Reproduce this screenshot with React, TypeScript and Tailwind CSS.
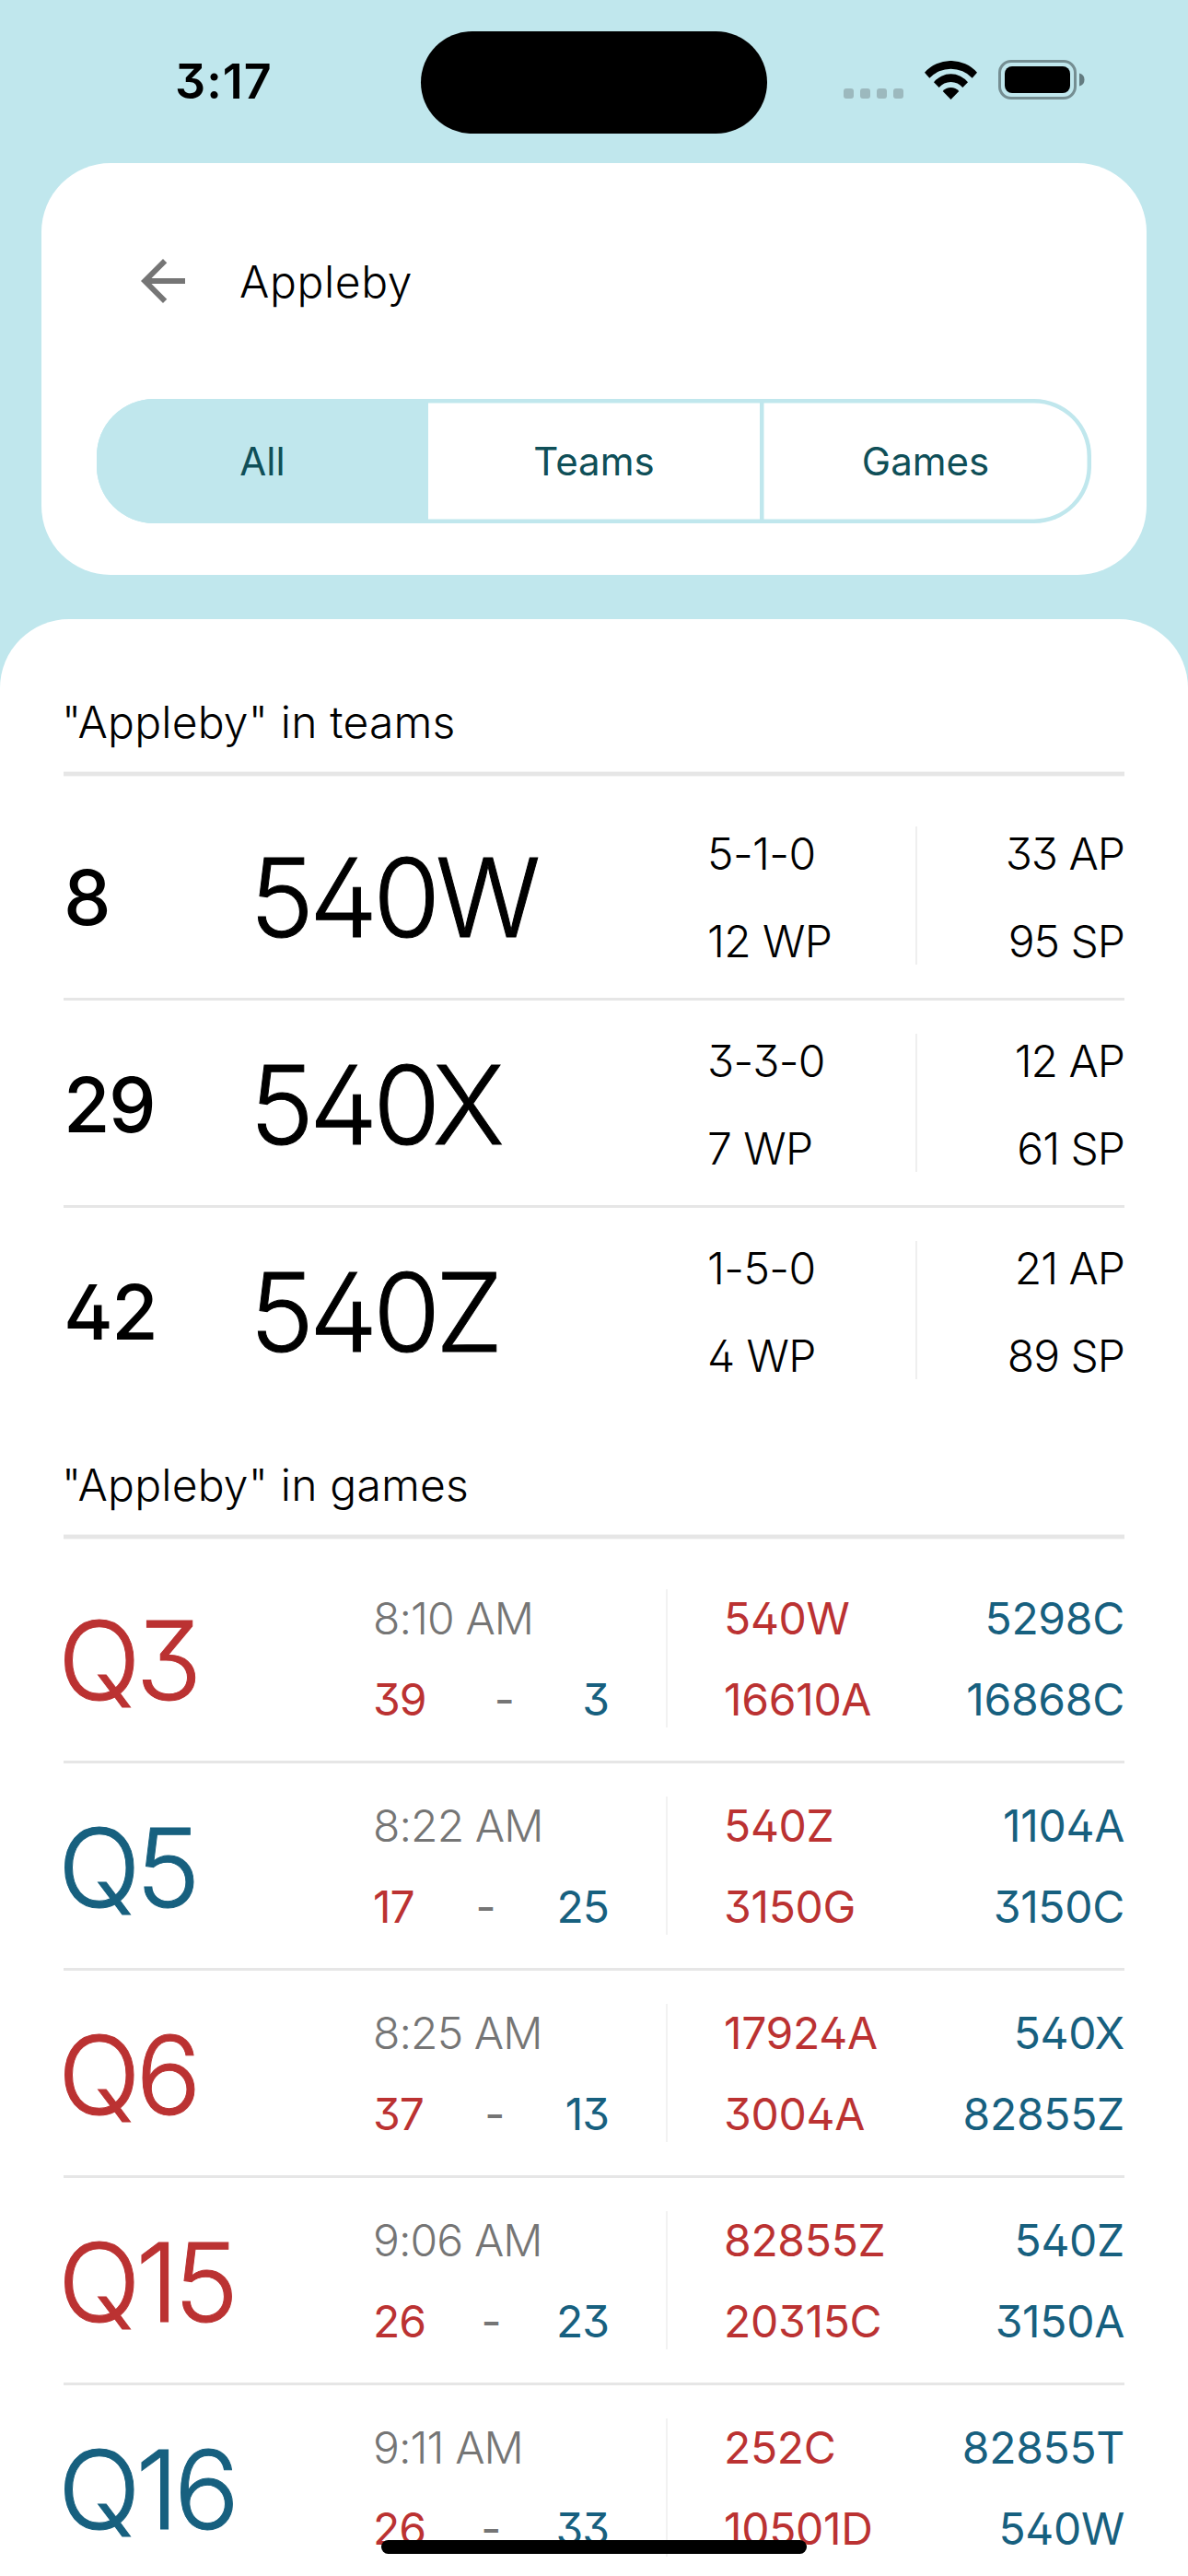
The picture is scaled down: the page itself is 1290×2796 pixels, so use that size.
import { useState } from "react";

type Side = "red" | "blue";

const teams = [
  { rank: "8", name: "540W", record: "5-1-0", wp: "12 WP", ap: "33 AP", sp: "95 SP" },
  { rank: "29", name: "540X", record: "3-3-0", wp: "7 WP", ap: "12 AP", sp: "61 SP" },
  { rank: "42", name: "540Z", record: "1-5-0", wp: "4 WP", ap: "21 AP", sp: "89 SP" },
];

const games: {
  id: string;
  winner: Side;
  time: string;
  score: [string, string];
  red: [string, string];
  blue: [string, string];
}[] = [
  { id: "Q3", winner: "red", time: "8:10 AM", score: ["39", "3"], red: ["540W", "16610A"], blue: ["5298C", "16868C"] },
  { id: "Q5", winner: "blue", time: "8:22 AM", score: ["17", "25"], red: ["540Z", "3150G"], blue: ["1104A", "3150C"] },
  { id: "Q6", winner: "red", time: "8:25 AM", score: ["37", "13"], red: ["17924A", "3004A"], blue: ["540X", "82855Z"] },
  { id: "Q15", winner: "red", time: "9:06 AM", score: ["26", "23"], red: ["82855Z", "20315C"], blue: ["540Z", "3150A"] },
  { id: "Q16", winner: "blue", time: "9:11 AM", score: ["26", "33"], red: ["252C", "10501D"], blue: ["82855T", "540W"] },
];

const sideColor: Record<Side, string> = { red: "text-[#bb3232]", blue: "text-[#17607f]" };

function StatusBar() {
  return (
    <div className="flex h-[177px] items-center">
      <div className="w-[457px] pl-[190px] text-[52px] leading-none font-semibold tracking-[1px]">3:17</div>
      <div className="mt-px h-[111px] w-[376px] rounded-full bg-black" />
      <div className="flex items-center pb-[4px] pl-[83px]">
        <div className="mt-[30px] mr-[23px] flex gap-[7px]">
          {[0, 1, 2, 3].map((i) => (
            <span key={i} className="size-[11px] rounded-[3px] bg-[#9cb9be]" />
          ))}
        </div>
        <svg width="57" height="42" viewBox="0 0 57 42" className="mr-[23px]">
          <path d="M0 12.7A38.3 38.3 0 0 1 57 12.7L51.7 18.7A31.9 31.9 0 0 0 5.3 18.7Z" />
          <path d="M10 23.3A23.5 23.5 0 0 1 47 23.3L41.3 29A16.6 16.6 0 0 0 15.7 29Z" />
          <path d="M19.7 33A11.7 11.7 0 0 1 37.3 33L28.5 42Z" />
        </svg>
        <svg width="94" height="43" viewBox="0 0 94 43">
          <rect x="1.5" y="1.5" width="82" height="40" rx="12.5" fill="none" stroke="#758e92" strokeWidth="3" />
          <rect x="7" y="7" width="71" height="29" rx="8" />
          <path d="M88 14.5A7.2 7.2 0 0 1 88 28.5Z" fill="#637b80" />
        </svg>
      </div>
    </div>
  );
}

function SearchCard() {
  const [active, setActive] = useState("All");
  return (
    <div className="mx-[45px] h-[447px] rounded-[75px] bg-white px-[60px] pt-[92px]">
      <div className="flex h-[72px] items-center gap-[47px] pl-[36px]">
        <svg width="72" height="72" viewBox="0 0 24 24" fill="#757575">
          <path d="M20 11H7.83l5.59-5.59L12 4l-8 8 8 8 1.41-1.41L7.83 13H20v-2z" />
        </svg>
        <span className="pt-[2px] text-[48px] font-light tracking-[0.6px]">Appleby</span>
      </div>
      <div className="mt-[92px] grid h-[135px] grid-cols-3 overflow-hidden rounded-[62px] text-[42px] text-[#0f4f58] shadow-[inset_0_0_0_4.5px_#c0e7ed]">
        {["All", "Teams", "Games"].map((tab) => (
          <button
            key={tab}
            onClick={() => setActive(tab)}
            className={
              (tab === active ? "bg-[#c0e7ed] " : "") +
              (tab === "Games" ? "shadow-[inset_4.5px_0_0_0_#c0e7ed]" : "")
            }
          >
            {tab}
          </button>
        ))}
      </div>
    </div>
  );
}

function SectionTitle({ children }: { children: string }) {
  return (
    <>
      <h2 className="-ml-[2px] h-[60px] text-[48px] leading-[60px] font-light tracking-[0.2px]">{children}</h2>
      <div className="mt-[23px] mb-[18px] h-[6px] border-y border-[#f5f5f5] bg-[#e6e6e6]" />
    </>
  );
}

function TeamRow({ team }: { team: (typeof teams)[number] }) {
  return (
    <div className="flex items-center border-b-[3px] border-[#e6e6e6] py-[36px] last:border-b-0">
      <div className="w-[202px] pt-[5px] text-[82px] leading-none font-medium tracking-[-1.5px]">{team.rank}</div>
      <div className="w-[497px] pt-[3px] text-[118px] leading-none font-light tracking-[-5px] [-webkit-text-stroke:1px]">
        {team.name}
      </div>
      <div className="flex h-[150px] w-[228px] flex-col gap-[44px] border-r-2 border-[#efefef] pt-[4px] text-[48px] leading-[51px] font-light tracking-[-0.6px]">
        <span>{team.record}</span>
        <span>{team.wp}</span>
      </div>
      <div className="flex h-[150px] flex-1 flex-col gap-[44px] pt-[4px] text-right text-[48px] leading-[51px] font-light tracking-[-1px]">
        <span>{team.ap}</span>
        <span>{team.sp}</span>
      </div>
    </div>
  );
}

function GameRow({ game }: { game: (typeof games)[number] }) {
  return (
    <div className="flex items-center border-b-[3px] border-[#e6e6e6] py-[36px]">
      <div
        className={`-ml-[6px] w-[342px] pt-[3px] text-[118px] leading-none font-light tracking-[-5px] [-webkit-text-stroke:1px] ${sideColor[game.winner]}`}
      >
        {game.id}
      </div>
      <div className="flex h-[150px] w-[320px] flex-col gap-[28px] border-r-2 border-[#f2f2f2] pt-[2px] pr-[62px] text-[48px] leading-[60px]">
        <span className="font-light tracking-[-0.9px] text-[#757575]">{game.time}</span>
        <div className="flex justify-between tracking-[-1px]">
          <span className="text-[#bb3232]">{game.score[0]}</span>
          <span className="text-[#757575]">-</span>
          <span className="text-[#17607f]">{game.score[1]}</span>
        </div>
      </div>
      <div className="flex h-[150px] flex-1 justify-between pt-[2px] pl-[61px] text-[48px] leading-[60px] tracking-[-0.3px]">
        <div className="flex flex-col gap-[28px] text-[#bb3232]">
          <span>{game.red[0]}</span>
          <span>{game.red[1]}</span>
        </div>
        <div className="flex flex-col gap-[28px] text-right text-[#17607f]">
          <span>{game.blue[0]}</span>
          <span>{game.blue[1]}</span>
        </div>
      </div>
    </div>
  );
}

export default function App() {
  return (
    <div className="relative h-[2796px] w-[1290px] overflow-hidden bg-[#c0e7ed] font-[Inter,sans-serif] text-black [font-feature-settings:'cv02','cv09']">
      <StatusBar />
      <SearchCard />
      <div className="mt-[48px] h-[2124px] rounded-t-[75px] bg-white px-[69px] pt-[82px]">
        <SectionTitle>"Appleby" in teams</SectionTitle>
        <div>
          {teams.map((t) => (
            <TeamRow key={t.name} team={t} />
          ))}
        </div>
        <div className="pt-[49px]">
          <SectionTitle>"Appleby" in games</SectionTitle>
        </div>
        {games.map((g) => (
          <GameRow key={g.id} game={g} />
        ))}
      </div>
      <div className="absolute top-[2757px] left-[414px] h-[15px] w-[462px] rounded-full bg-black" />
    </div>
  );
}
